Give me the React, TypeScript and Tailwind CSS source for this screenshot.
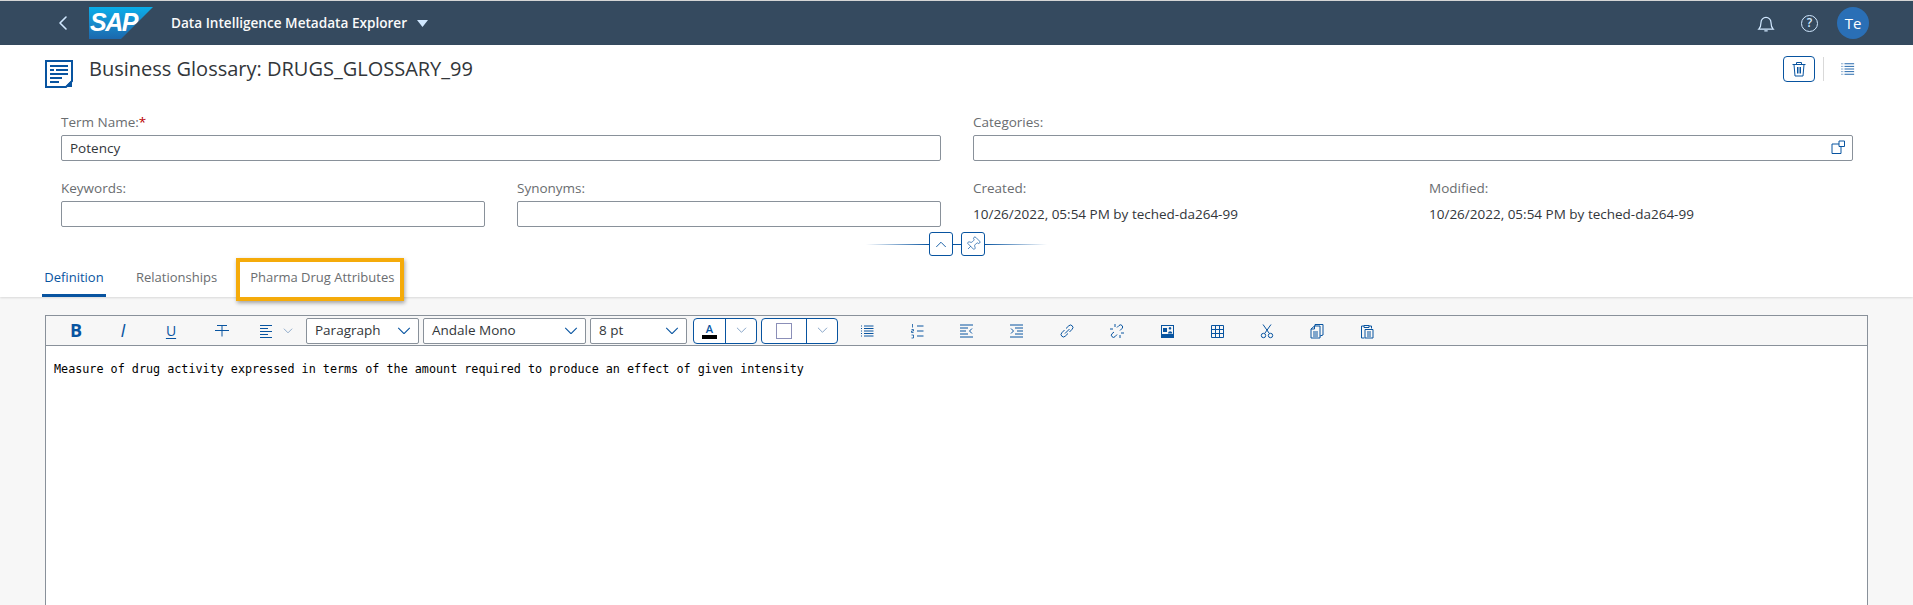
import { ChevronLeft, Pin } from 'lucide-react'
import type { ReactNode } from 'react'

const SANS = "font-['Open_Sans','Noto_Sans',sans-serif]"

function Glyph({ size = 16, children }: { size?: number; children: ReactNode }) {
  return (
    <svg width={size} height={size} viewBox="0 0 16 16" fill="none" stroke="currentColor" strokeWidth="1" className="block">
      {children}
    </svg>
  )
}

function Chev({ width = 14, up, className }: { width?: number; up?: boolean; className?: string }) {
  return (
    <svg width={width} height={width * 0.55} viewBox="0 0 14 8" fill="none" stroke="currentColor" strokeWidth="1.100" className={className}>
      <path d={up ? 'M1 7.500 7 1.500 13 7.500' : 'M1 1 7 7 13 1'} />
    </svg>
  )
}

function Field({ label, required, children }: { label: string; required?: boolean; children?: ReactNode }) {
  return (
    <div className="flex flex-col">
      <label className="text-[13.5px] leading-[18px] text-[#6a6d70] h-[25px] pt-[3px]">
        {label}
        {required && <span className="text-[#bb0000]">*</span>}
      </label>
      <div className="relative h-[26px] border border-[#89919a] rounded-[2px] bg-white px-[8px] text-[13.5px] leading-[24px] text-[#32363a]">
        {children}
      </div>
    </div>
  )
}

function SelectBox({ label, width }: { label: string; width: string }) {
  return (
    <div className={`${width} h-[26px] shrink-0 flex items-center justify-between border border-[#89919a] rounded-[2px] bg-white pl-[8px] pr-[7px] text-[13.5px] text-[#32363a]`}>
      <span>{label}</span>
      <Chev className="text-[#0854a0]" />
    </div>
  )
}

const ToolIcons: ReactNode[] = [
  <Glyph><path d="M5 3h9.500M5 5.500h9.500M5 8h9.500M5 10.500h9.500M5 13h9.500" /><path d="M2 3h1.500M2 5.500h1.500M2 8h1.500M2 10.500h1.500M2 13h1.500" strokeDasharray="1 .5" /></Glyph>,
  <Glyph><path d="M8 3h6.500M8 8h6.500M8 13h6.500" /><path d="M3.500 1v3.500M2.500 6.500h2v1.500h-2v1.500h2M2.500 12h2v3h-2" strokeWidth=".8" /></Glyph>,
  <Glyph><path d="M1 2h13M1 5h8M1 8h6M1 11h8M1 14h13M13 5.500 10.500 8 13 10.500" /></Glyph>,
  <Glyph><path d="M1 2h13M6 5h8M8 8h6M6 11h8M1 14h13M2 5.500 4.500 8 2 10.500" /></Glyph>,
  <Glyph><path d="M6 10.500 10.500 6M5.500 7 2.800 9.800a2.300 2.300 0 0 0 3.400 3.400L9 10.500M7 5.500l2.800-2.700a2.300 2.300 0 0 1 3.400 3.400L10.500 9" /></Glyph>,
  <Glyph><path d="M6 1v3M1 6h3M11 15v-3M15 10h-3M5 9l-2 1.700a2 2 0 0 0 3 3L8 11.500M8 4.500 10 2.500a2 2 0 0 1 3 3L11 7.500" /></Glyph>,
  <Glyph><path fill="currentColor" stroke="none" d="M2 2h13v13H2zM3 3v8h11V3zM4 5h4v4H4zM11 4a1.300 1.300 0 1 1-.01 0M9 10.500c.3-3 4-3 4.300 0z" fillRule="evenodd" /></Glyph>,
  <Glyph><path d="M2.500 2.500h12v12h-12zM6.500 2.500v12M10.500 2.500v12M2.500 6.500h12M2.500 10.500h12" /></Glyph>,
  <Glyph><path d="M4 1.500 10 10M12 1.500 6 10" /><circle cx="4.500" cy="12.500" r="2.200" /><circle cx="11.500" cy="12.500" r="2.200" /></Glyph>,
  <Glyph><path d="M2 6 5.500 3H11v12H2zM5.500 3v3H2M4 9h5M4 11h5M4 13h5M6 3V1.500h8V12l-3 1" /></Glyph>,
  <Glyph><path d="M5 3H2.500v12h3M5 2.500h5v2H5zM10 3h2.500v2.500M6 6.500h8V15H6zM8 9h4M8 11h4M8 13h4" /></Glyph>,
]

export default function App() {
  return (
    <div className={`${SANS} w-[1913px] h-[605px] overflow-hidden bg-[#f7f7f7]`}>
      <div className="h-[1px] bg-[#d5d5d5]" />
      <header className="h-[44px] bg-[#354a5f] flex items-center text-white pr-[44px]">
        <ChevronLeft size={24} strokeWidth={1.6} className="ml-[51px] text-[#d1e8ff]" />
        <div className="relative ml-[14px] w-[64px] h-[32px] bg-gradient-to-b from-[#08aeea] to-[#1b68ad] [clip-path:polygon(0_0,100%_0,50%_100%,0_100%)]">
          <span className="absolute left-[1px] top-[-1px] font-['Liberation_Sans',sans-serif] font-bold italic text-[25px] leading-[32px] tracking-[-1.5px]">SAP</span>
        </div>
        <span className="ml-[18px] text-[13.6px] font-semibold text-[#fafafa]">Data Intelligence Metadata Explorer</span>
        <svg width="11" height="7" viewBox="0 0 11 7" className="ml-[10px]"><path d="M0 0h11L5.500 7z" fill="#d1e8ff" /></svg>
        <div className="ml-auto flex items-center text-[#d1e8ff]">
          <svg width="20" height="20" viewBox="0 0 18 18" fill="none" stroke="currentColor" strokeWidth="1.100">
            <path d="M2.500 14.500c1.500-1.500 2-2.500 2-6a4.500 4.500 0 0 1 9 0c0 3.500.5 4.500 2 6zM7.500 16h3" />
          </svg>
          <div className="ml-[25px] w-[17px] h-[17px] rounded-full border-[1.5px] border-current flex items-center justify-center text-[12px] font-semibold">?</div>
          <div className="ml-[19px] w-[32px] h-[32px] rounded-full bg-[#2a6fb6] text-white flex items-center justify-center text-[15px]">Te</div>
        </div>
      </header>

      <section className="bg-white h-[252px] shadow-[0_1px_2px_rgba(0,0,0,0.12)] relative">
        <div className="flex items-start pl-[45px] pr-[58px] pt-[15px] h-[67px]">
          <svg width="28" height="28" viewBox="0 0 28 28" className="shrink-0">
            <path d="M1 1h26v20l-6 6H1z" fill="none" stroke="#0854a0" strokeWidth="2" />
            <path d="M5 5h18v2H5zM5 9h4v2H5zM11 9h12v2H11zM5 13h18v2H5zM5 17h12v2H5zM5 21h9v2H5zM20 27l7-7v7z" fill="#0854a0" />
          </svg>
          <h1 className="ml-[16px] text-[20px] leading-[24px] text-[#32363a] mt-[-3px]">Business Glossary: DRUGS_GLOSSARY_99</h1>
          <div className="ml-auto flex items-center mt-[-4px]">
            <button className="w-[32px] h-[26px] border border-[#0854a0] rounded-[4px] flex items-center justify-center text-[#0854a0]">
              <Glyph size={16}><path d="M1.500 3.500h13M5.500 3V1.500h5V3M3 3.500 4 15h8l1-11.500M6.500 6v6.500M8 6v6.500M9.500 6v6.500" /></Glyph>
            </button>
            <div className="w-px h-[24px] bg-[#d9d9d9] ml-[8px]" />
            <div className="ml-[17px] text-[#0854a0]">
              <Glyph size={14}><path d="M4 2h11M4 5h11M4 8h11M4 11h11M4 14h11" /><path d="M.5 2h2M.5 5h2M.5 8h2M.5 11h2M.5 14h2" strokeDasharray="1 .5" /></Glyph>
            </div>
          </div>
        </div>

        <div className="grid grid-cols-2 gap-x-[32px] pl-[61px] pr-[60px] mt-[-2px]">
          <Field label="Term Name:" required>Potency</Field>
          <Field label="Categories:">
            <span className="absolute right-[6px] top-[4px] text-[#0854a0]">
              <Glyph size={16}><path d="M9 1h5.500v5.500H9zM9 4H2v9.500h9V6.500" /></Glyph>
            </span>
          </Field>
        </div>

        <div className="grid grid-cols-2 gap-x-[32px] pl-[61px] pr-[60px] mt-[15px]">
          <div className="grid grid-cols-2 gap-x-[32px]">
            <Field label="Keywords:" />
            <Field label="Synonyms:" />
          </div>
          <div className="grid grid-cols-2 gap-x-[32px] text-[13.5px]">
            <div>
              <div className="h-[24px] leading-[18px] text-[#6a6d70] pt-[3px]">Created:</div>
              <div className="leading-[26px] pt-[1px] text-[#32363a] whitespace-nowrap">10/26/2022, 05:54 PM by teched-da264-99</div>
            </div>
            <div>
              <div className="h-[24px] leading-[18px] text-[#6a6d70] pt-[3px]">Modified:</div>
              <div className="leading-[26px] pt-[1px] text-[#32363a] whitespace-nowrap">10/26/2022, 05:54 PM by teched-da264-99</div>
            </div>
          </div>
        </div>

        <div className="flex items-center justify-center ml-[-1px] mt-[5px] h-[24px]">
          <div className="w-[63px] h-px bg-gradient-to-r from-transparent to-[#0854a0]" />
          <button className="w-[24px] h-[24px] bg-white border border-[#0854a0] rounded-[3px] flex items-center justify-center text-[#0854a0]">
            <Chev width={12} up />
          </button>
          <div className="w-[8px] h-px bg-[#0854a0]" />
          <button className="w-[24px] h-[24px] bg-white border border-[#0854a0] rounded-[3px] flex items-center justify-center text-[#0854a0]">
            <Pin size={16} strokeWidth={1} className="rotate-45" />
          </button>
          <div className="w-[62px] h-px bg-gradient-to-l from-transparent to-[#0854a0]" />
        </div>

        <nav className="absolute left-[42px] bottom-0 flex text-[13px] h-[39px]">
          <div className="w-[64px] text-center leading-[38px] text-[#0854a0] border-b-[3px] border-[#0854a0]">Definition</div>
          <div className="ml-[30px] leading-[38px] text-[#6a6d70]">Relationships</div>
          <div className="relative ml-[33px] leading-[38px] text-[#6a6d70]">
            Pharma Drug Attributes
            <div className="absolute left-[-14px] right-[-10px] top-0 h-[43px] border-[4px] border-[#f5ab0a] shadow-[1px_2px_4px_rgba(0,0,0,0.35)]" />
          </div>
        </nav>
      </section>

      <section className="mx-[45px] mt-[18px] border border-[#89919a] bg-white h-[300px]">
        <div className="h-[30px] bg-[#f7f7f7] border-b border-[#89919a] flex items-center text-[#0854a0] pl-[6px]">
          <div className="w-[48px] flex justify-center font-bold text-[18px]">B</div>
          <div className="w-[46px] flex justify-center italic text-[18px]">I</div>
          <div className="w-[50px] flex justify-center text-[14px] underline underline-offset-2">U</div>
          <div className="w-[52px] flex justify-center">
            <Glyph><path d="M1 7.500h14M3 2.500h10M8 2.500v11" /></Glyph>
          </div>
          <div className="w-[35px] flex justify-center">
            <Glyph><path d="M2 2.500h12M2 5.500h8M2 8.500h12M2 11.500h8M2 14.500h12" /></Glyph>
          </div>
          <Chev width={10} className="text-[#6f93bd]" />
          <div className="flex items-center gap-[4px] ml-[13px]">
            <SelectBox label="Paragraph" width="w-[113px]" />
            <SelectBox label="Andale Mono" width="w-[163px]" />
            <SelectBox label="8 pt" width="w-[97px]" />
          </div>
          <div className="ml-[6px] w-[64px] h-[26px] border border-[#0854a0] rounded-[4px] flex bg-white shrink-0">
            <div className="w-[32px] border-r border-[#0854a0] flex flex-col items-center justify-center">
              <span className="text-[11px] leading-[11px] font-semibold">A</span>
              <span className="w-[15px] h-[4px] bg-black mt-[1px]" />
            </div>
            <div className="flex-1 flex items-center justify-center"><Chev width={11} className="text-[#6f93bd]" /></div>
          </div>
          <div className="ml-[4px] w-[77px] h-[26px] border border-[#0854a0] rounded-[4px] flex bg-white shrink-0">
            <div className="w-[45px] border-r border-[#0854a0] flex items-center justify-center">
              <span className="w-[16px] h-[16px] border border-[#8b8fb8]" />
            </div>
            <div className="flex-1 flex items-center justify-center"><Chev width={11} className="text-[#6f93bd]" /></div>
          </div>
          <div className="flex ml-[4px]">
            {ToolIcons.map((icon, i) => (
              <div key={i} className="w-[50px] flex justify-center">{icon}</div>
            ))}
          </div>
        </div>
        <p className="font-['DejaVu_Sans_Mono',monospace] text-[11.75px] leading-[16px] text-black pl-[8px] pt-[15px]">
          Measure of drug activity expressed in terms of the amount required to produce an effect of given intensity
        </p>
      </section>
    </div>
  )
}
